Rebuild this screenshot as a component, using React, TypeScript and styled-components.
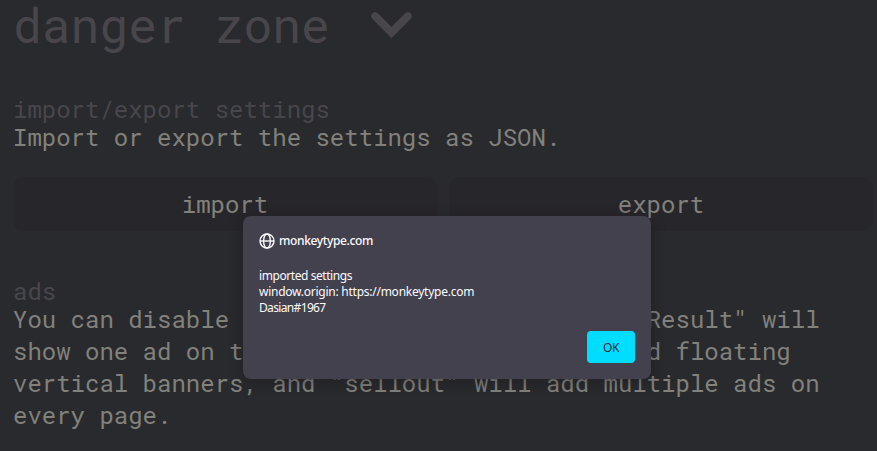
import React from 'react';
import styled, { createGlobalStyle } from 'styled-components';

const GlobalStyle = createGlobalStyle`
  * { box-sizing: border-box; }
  body { margin: 0; background: #292a2d; overflow: hidden; }
`;

const Page = styled.main`
  position: relative;
  width: 877px;
  height: 451px;
  overflow: hidden;
  padding: 0 3px 0 13px;
  background: #292a2d;
  font-family: 'Roboto Mono', 'Liberation Mono', monospace;
  font-size: 24px;
  color: #82817c;
`;

const GroupTitle = styled.h1`
  display: flex;
  align-items: center;
  gap: 41px;
  height: 50px;
  margin: 0 0 45px;
  font-size: 48px;
  line-height: 50px;
  font-weight: 400;
  color: #48464b;
`;

const Chevron = styled.svg`
  width: 42px;
  height: 28px;
`;

const Section = styled.section<{ $gap: number }>`
  margin-bottom: ${(p) => p.$gap}px;
`;

const Label = styled.h2`
  margin: 0;
  height: 26px;
  line-height: 28px;
  font-size: 24px;
  font-weight: 400;
  color: #48464b;
`;

const Description = styled.p`
  margin: 0;
  line-height: 32px;
  white-space: pre;
`;

const Buttons = styled.div`
  display: grid;
  grid-template-columns: 424px 424px;
  gap: 12px;
  margin-top: 24px;
`;

const Button = styled.button`
  height: 54px;
  padding: 0;
  border: 0;
  border-radius: 12px;
  background: #27262a;
  color: inherit;
  font: inherit;
`;

const Dialog = styled.div`
  position: absolute;
  left: 243px;
  top: 216px;
  width: 408px;
  height: 163px;
  padding: 16px;
  display: flex;
  flex-direction: column;
  border-radius: 8px;
  background: #44414e;
  box-shadow: 0 2px 14px rgba(24, 20, 28, 0.45);
  color: #fbfbfe;
  font-family: 'Segoe UI', 'Noto Sans', sans-serif;
  font-size: 12px;
`;

const Origin = styled.div`
  display: flex;
  align-items: center;
  gap: 4px;
  height: 17px;
  font-weight: 500;
  letter-spacing: -0.36px;
`;

const Message = styled.div`
  margin-top: 19px;
`;

const MessageLine = styled.div<{ $tracking: number }>`
  height: 16px;
  line-height: 16px;
  white-space: nowrap;
  letter-spacing: ${(p) => p.$tracking}px;
`;

const OkButton = styled.button`
  align-self: flex-end;
  width: 48px;
  height: 32px;
  margin-top: auto;
  padding: 0;
  border: 0;
  border-radius: 4px;
  background: #00ddff;
  color: #2b2a33;
  font: inherit;
  letter-spacing: -0.4px;
`;

export default function App() {
  return (
    <Page>
      <GlobalStyle />
      <GroupTitle>
        danger zone
        <Chevron viewBox="0 0 42 28" fill="none">
          <path d="M4 5 20.5 21.5 37 5" stroke="#48464b" strokeWidth="7.8" />
          <path d="M4 5 20.5 21.5 37 5" stroke="#48464b" strokeWidth="7.4" strokeLinecap="round" />
        </Chevron>
      </GroupTitle>
      <Section $gap={46}>
        <Label>import/export settings</Label>
        <Description>Import or export the settings as JSON.</Description>
        <Buttons>
          <Button>import</Button>
          <Button>export</Button>
        </Buttons>
      </Section>
      <Section $gap={0}>
        <Label>ads</Label>
        <Description>
          {'You can disable ads completely. Setting to "Result" will\nshow one ad on the result page, "on" will add floating\nvertical banners, and "sellout" will add multiple ads on\nevery page.'}
        </Description>
      </Section>
      <Dialog role="alertdialog">
        <Origin>
          <svg width="16" height="16" viewBox="0 0 16 16" fill="none" stroke="#fbfbfe" strokeWidth="1.4">
            <circle cx="8" cy="8" r="7" />
            <ellipse cx="8" cy="8" rx="3.4" ry="7" />
            <path d="M1 8h14" />
          </svg>
          monkeytype.com
        </Origin>
        <Message>
          <MessageLine $tracking={-0.43}>imported settings</MessageLine>
          <MessageLine $tracking={-0.25}>window.origin: https://monkeytype.com</MessageLine>
          <MessageLine $tracking={-0.65}>Dasian#1967</MessageLine>
        </Message>
        <OkButton>OK</OkButton>
      </Dialog>
    </Page>
  );
}
